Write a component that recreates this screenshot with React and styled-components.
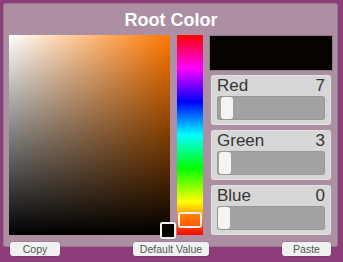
import React from 'react';
import styled, { createGlobalStyle } from 'styled-components';

const GlobalStyle = createGlobalStyle`
  html, body {
    margin: 0;
    padding: 0;
    background: #8d3e7a;
  }

  body {
    font-family: "Liberation Sans", Arial, sans-serif;
  }
`;

const Page = styled.div`
  width: 343px;
  height: 262px;
  box-sizing: border-box;
  padding: 3px 5px 0 3px;
  overflow: hidden;
`;

const Panel = styled.div`
  height: 244px;
  box-sizing: border-box;
  padding: 8px 5px 12px 6px;
  background: #ad8fa3;
  border-radius: 3px;
  box-shadow: inset 0 0 0 1px rgba(120, 80, 110, 0.35);
`;

const Title = styled.h1`
  margin: 0 0 6px;
  font-size: 18px;
  line-height: 18px;
  font-weight: 700;
  color: #fff;
  text-align: center;
`;

const Body = styled.div`
  display: flex;
  height: 200px;
`;

const ColorField = styled.div`
  position: relative;
  width: 161px;
  flex: none;
  background:
    linear-gradient(to top, #000, rgba(0, 0, 0, 0)),
    linear-gradient(to right, #fff, ${p => p.$hue});
`;

const FieldMarker = styled.div`
  position: absolute;
  left: 151px;
  top: 187px;
  width: 16px;
  height: 17px;
  box-sizing: border-box;
  border: 2px solid #f2f2f2;
  border-radius: 2px;
  background: ${p => p.$color};
  box-shadow: 0 0 1px rgba(0, 0, 0, 0.5);
`;

const HueBar = styled.div`
  position: relative;
  width: 26px;
  flex: none;
  margin-left: 7px;
  background: linear-gradient(
    to bottom,
    #f00 0%,
    #f0f 16.67%,
    #00f 33.33%,
    #0ff 50%,
    #0f0 66.67%,
    #ff0 83.33%,
    #f00 100%
  );
`;

const HueMarker = styled.div`
  position: absolute;
  left: 1px;
  top: 177px;
  width: 24px;
  height: 16px;
  box-sizing: border-box;
  border: 2px solid #f0f0f0;
  border-radius: 3px;
  background: linear-gradient(to bottom, #ff8400, #ff5a00);
`;

const Side = styled.div`
  flex: 1;
  margin-left: 6px;
  display: flex;
  flex-direction: column;
`;

const Swatch = styled.div`
  height: 36px;
  flex: none;
  box-sizing: border-box;
  border: 1px solid #8c7a86;
  background: ${p => p.$color};
  margin-bottom: 4px;
`;

const ChannelCard = styled.div`
  height: 50px;
  box-sizing: border-box;
  margin: 0 2px;
  padding: 2px 6px 5px;
  background: #d7d7d7;
  border-radius: 3px;
  box-shadow: inset 0 0 0 1px rgba(255, 255, 255, 0.25);

  & + & {
    margin-top: 5px;
  }
`;

const ChannelHead = styled.div`
  display: flex;
  justify-content: space-between;
  font-size: 17px;
  line-height: 17px;
  color: #353535;
  margin-bottom: 2px;
`;

const Track = styled.div`
  position: relative;
  height: 24px;
  background: #a2a2a2;
  border-radius: 3px;
  box-shadow: inset 0 0 0 1px rgba(0, 0, 0, 0.06);
`;

const Thumb = styled.div`
  position: absolute;
  top: 1px;
  bottom: 1px;
  width: 12px;
  background: #f4f4f4;
  border-radius: 3px;
`;

const Actions = styled.div`
  display: flex;
  justify-content: space-between;
  margin-top: -5px;
  padding: 0 7px;
`;

const Button = styled.button`
  width: ${p => p.$width}px;
  height: 14px;
  padding: 0;
  border: 0;
  border-radius: 3px;
  background: #f1f1f1;
  box-shadow: 0 0 0 1px rgba(0, 0, 0, 0.08);
  font-family: "Liberation Sans", Arial, sans-serif;
  font-size: 10.5px;
  line-height: 14px;
  color: #555;
  cursor: pointer;
`;

const channels = [
  { name: 'Red', value: 7 },
  { name: 'Green', value: 3 },
  { name: 'Blue', value: 0 },
];

const Channel = ({ name, value }) => (
  <ChannelCard>
    <ChannelHead>
      <span>{name}</span>
      <span>{value}</span>
    </ChannelHead>
    <Track>
      <Thumb style={{ left: 1 + Math.round((value / 255) * 94) }} />
    </Track>
  </ChannelCard>
);

const App = () => {
  const color = 'rgb(7, 3, 0)';

  return (
    <>
      <GlobalStyle />
      <Page>
        <Panel>
          <Title>Root Color</Title>
          <Body>
            <ColorField $hue="#ff7800">
              <FieldMarker $color={color} />
            </ColorField>
            <HueBar>
              <HueMarker />
            </HueBar>
            <Side>
              <Swatch $color={color} />
              {channels.map(c => (
                <Channel key={c.name} {...c} />
              ))}
            </Side>
          </Body>
        </Panel>
        <Actions>
          <Button $width={50}>Copy</Button>
          <Button $width={76}>Default Value</Button>
          <Button $width={49}>Paste</Button>
        </Actions>
      </Page>
    </>
  );
};

export default App;
